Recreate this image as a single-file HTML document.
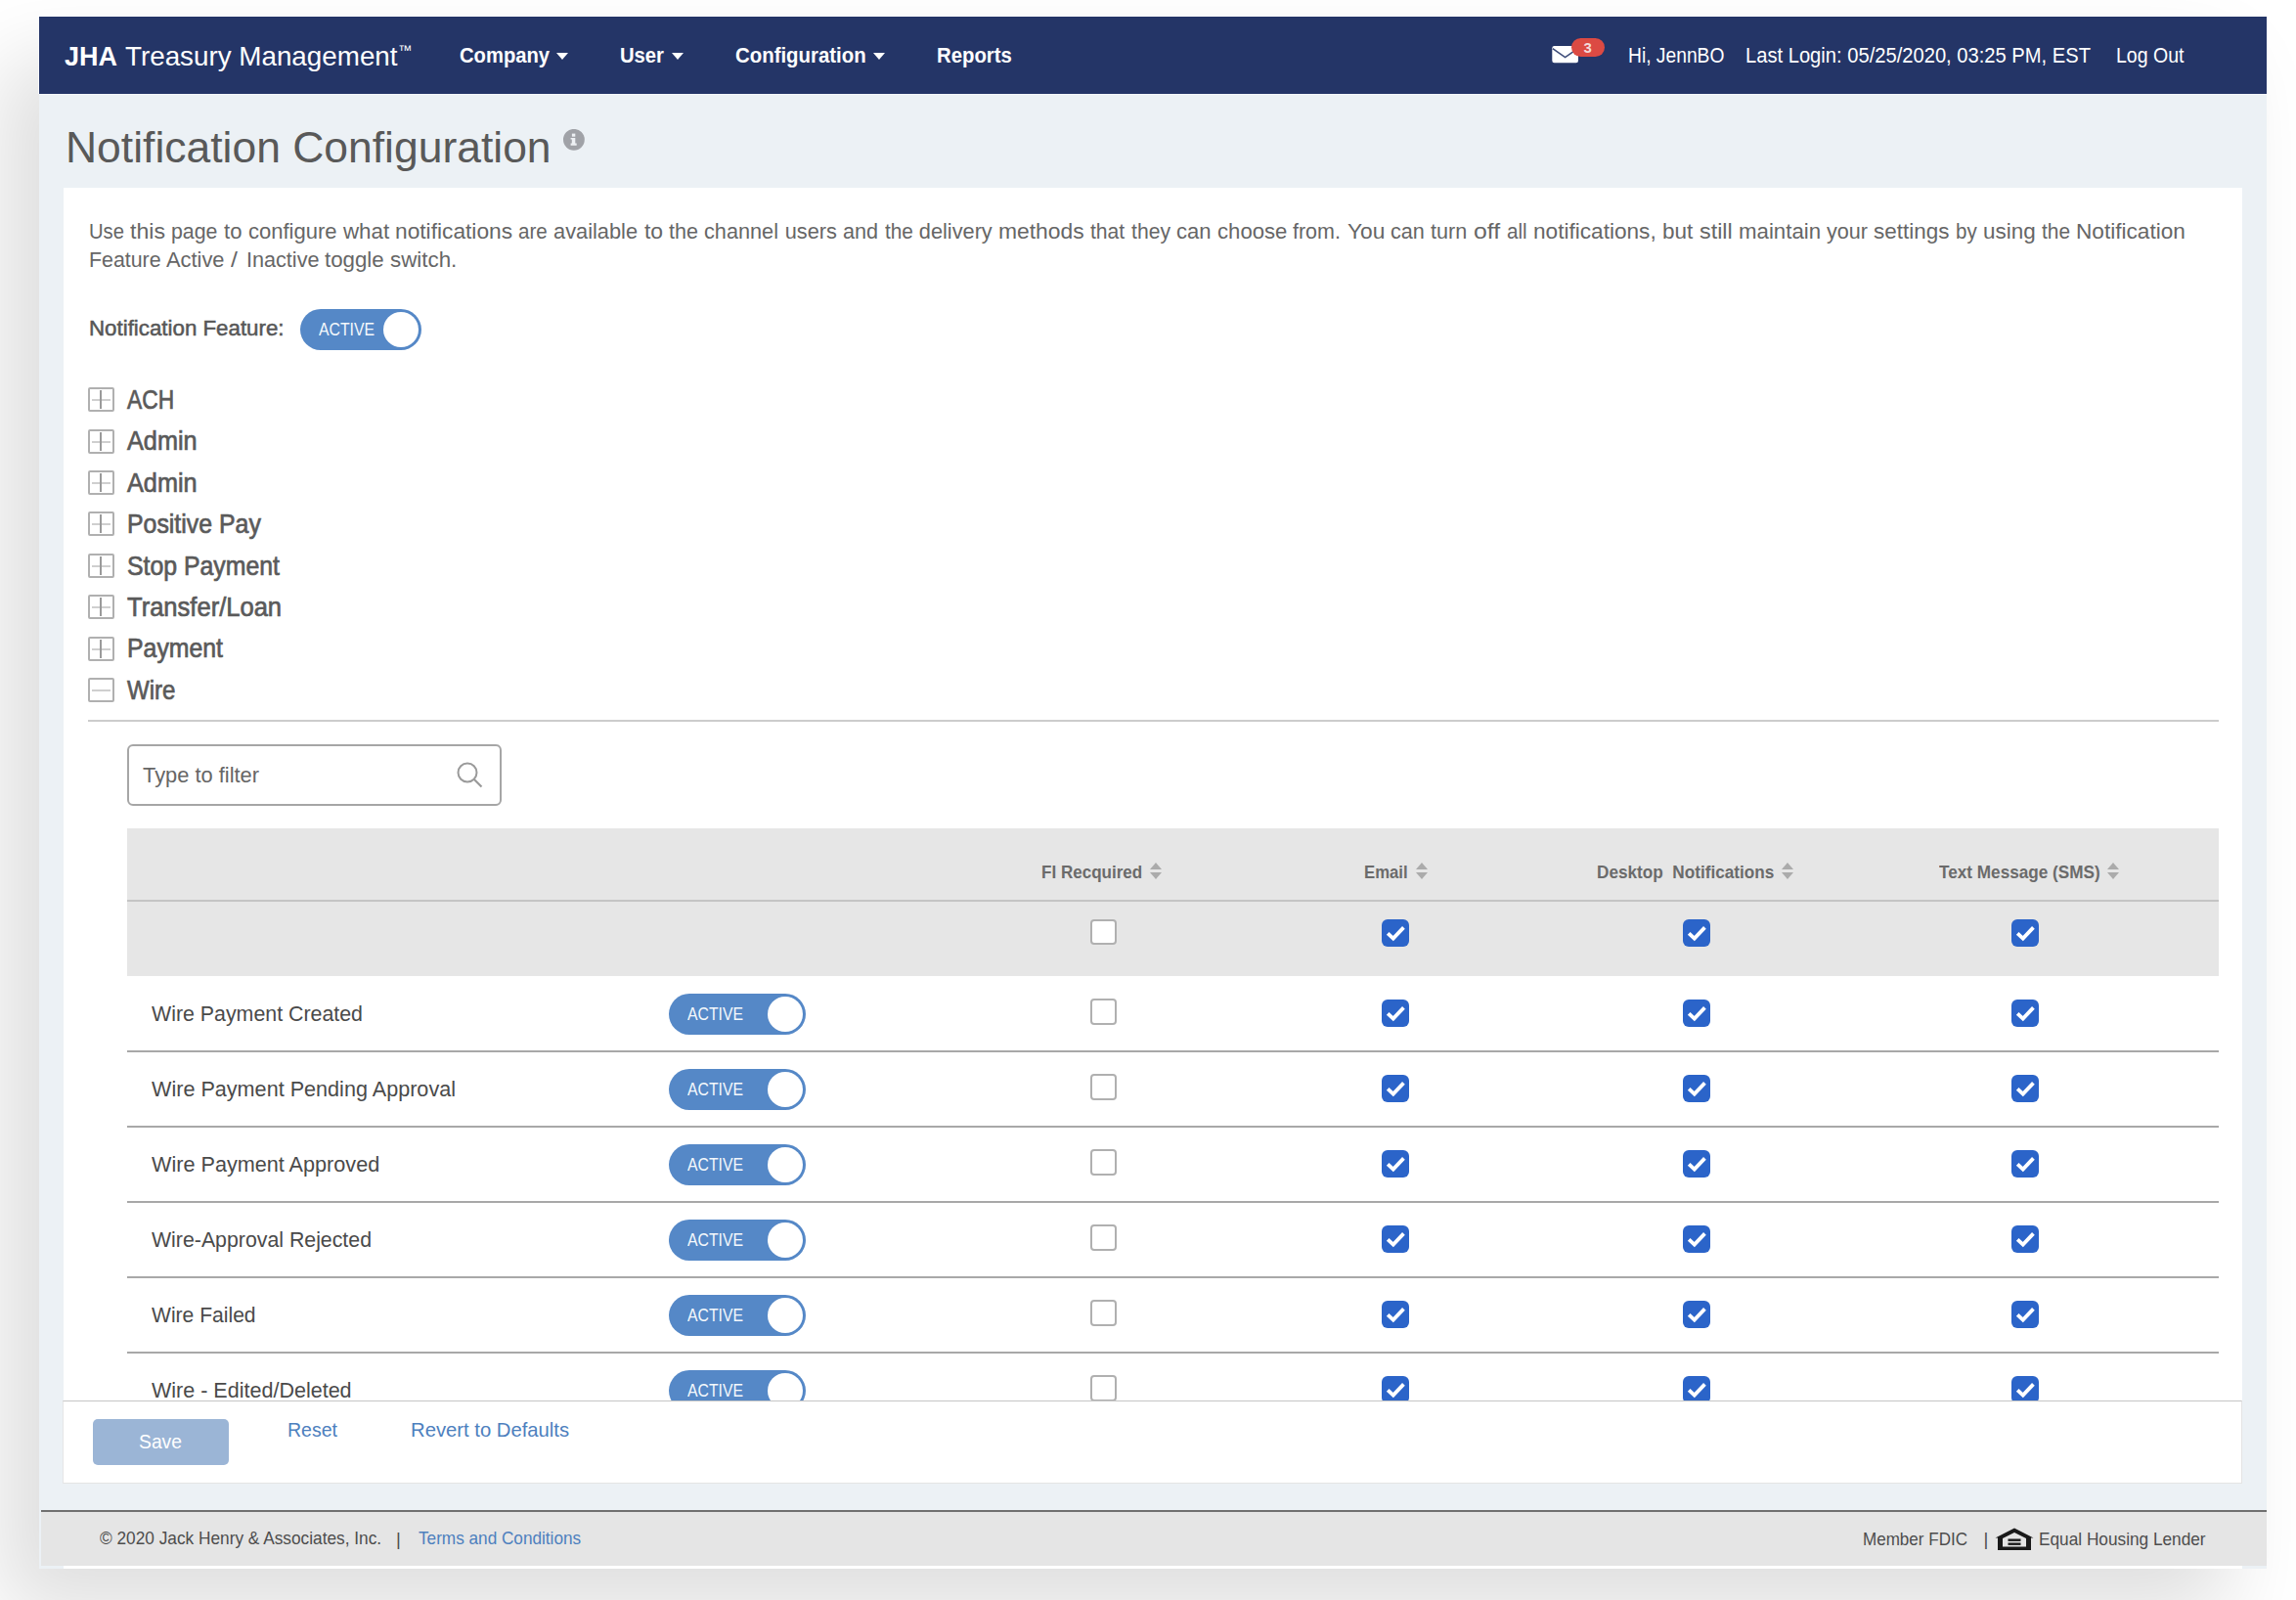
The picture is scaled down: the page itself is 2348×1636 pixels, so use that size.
<!DOCTYPE html>
<html><head><meta charset="utf-8"><title>Notification Configuration</title>
<style>
html,body{margin:0;padding:0;}
body{width:2348px;height:1636px;overflow:hidden;position:relative;background:#fff;font-family:"Liberation Sans",sans-serif;}
.t{position:absolute;white-space:nowrap;}
.r{position:absolute;}
</style></head><body>
<div class="r" style="left:40px;top:17px;width:2278px;height:1587px;background:#fff;box-shadow:-40px 45px 80px rgba(0,0,0,0.13);"></div><div class="r" style="left:39px;top:16px;width:2279px;height:80px;background:#fff;"></div><div class="r" style="left:40px;top:17px;width:2278px;height:1587px;background:#ecf1f5;"></div><div class="r" style="left:40px;top:17px;width:2278px;height:79px;background:#243567;"></div><div class="r" style="left:40px;top:96px;width:2278px;height:1px;background:#f3f6f9;"></div><div class="t" style="left:65.70px;top:38.50px;font-size:28.25px;line-height:37px;transform:scaleX(0.9553);transform-origin:0 0;color:#fff;font-weight:bold;">JHA</div><div class="t" style="left:127.50px;top:38.50px;font-size:28.25px;line-height:37px;transform:scaleX(0.9836);transform-origin:0 0;color:#fff;">Treasury Management</div><div class="t" style="left:407.00px;top:42.00px;font-size:14.0px;line-height:18px;color:#fff;">™</div><div class="t" style="left:469.50px;top:42.00px;font-size:22.0px;line-height:29px;transform:scaleX(0.9189);transform-origin:0 0;color:#fff;font-weight:bold;">Company</div><div class="r" style="left:569px;top:54px;width:0;height:0;border-left:6.5px solid transparent;border-right:6.5px solid transparent;border-top:7px solid #fff;"></div><div class="t" style="left:634.00px;top:42.00px;font-size:22.0px;line-height:29px;transform:scaleX(0.9197);transform-origin:0 0;color:#fff;font-weight:bold;">User</div><div class="r" style="left:686.6px;top:54px;width:0;height:0;border-left:6.5px solid transparent;border-right:6.5px solid transparent;border-top:7px solid #fff;"></div><div class="t" style="left:752.00px;top:42.00px;font-size:22.0px;line-height:29px;transform:scaleX(0.9273);transform-origin:0 0;color:#fff;font-weight:bold;">Configuration</div><div class="r" style="left:893px;top:54px;width:0;height:0;border-left:6.5px solid transparent;border-right:6.5px solid transparent;border-top:7px solid #fff;"></div><div class="t" style="left:958.00px;top:42.00px;font-size:22.0px;line-height:29px;transform:scaleX(0.9240);transform-origin:0 0;color:#fff;font-weight:bold;">Reports</div><svg class="r" style="left:1587px;top:46px" width="28" height="19" viewBox="0 0 28 19"><rect x="0.3" y="1" width="26.7" height="17.2" rx="2.2" fill="#fff"/><path d="M0.8 3.6 L13.6 12.6 L26.5 3.6" stroke="#3d4c79" stroke-width="1.6" fill="none"/></svg><div class="r" style="left:1606.5px;top:39px;width:34.5px;height:19px;background:#dc4a43;border-radius:9.5px;"></div><div class="t" style="left:1619.60px;top:39.20px;font-size:15.0px;line-height:20px;color:#f3dada;font-weight:bold;">3</div><div class="t" style="left:1665.00px;top:42.90px;font-size:21.75px;line-height:28px;transform:scaleX(0.8848);transform-origin:0 0;color:#fff;">Hi, JennBO</div><div class="t" style="left:1784.50px;top:42.90px;font-size:21.75px;line-height:28px;transform:scaleX(0.9268);transform-origin:0 0;color:#fff;">Last Login: 05/25/2020, 03:25 PM, EST</div><div class="t" style="left:2163.50px;top:42.90px;font-size:21.75px;line-height:28px;transform:scaleX(0.8981);transform-origin:0 0;color:#fff;">Log Out</div><div class="t" style="left:67.40px;top:121.50px;font-size:44.25px;line-height:58px;transform:scaleX(1.0044);transform-origin:0 0;color:#595959;">Notification Configuration</div><svg class="r" style="left:575px;top:132px" width="24" height="24" viewBox="0 0 24 24"><circle cx="11.9" cy="10.8" r="10.9" fill="#a0a2a7"/><rect x="9.9" y="4.6" width="3.4" height="3.1" fill="#eef1f4"/><path d="M8.6 9.1 H13.3 V14.4 H14.7 V16.7 H8.6 V14.4 H9.8 V10.5 H8.6 Z" fill="#eef1f4"/></svg><div class="r" style="left:65px;top:192px;width:2228px;height:1324px;background:#fff;"></div><div class="t" style="left:90.60px;top:222.50px;font-size:21.75px;line-height:28px;transform:scaleX(0.9309);transform-origin:0 0;color:#666;">Use</div><div class="t" style="left:132.90px;top:222.50px;font-size:21.75px;line-height:28px;transform:scaleX(1.0637);transform-origin:0 0;color:#666;">this</div><div class="t" style="left:175.20px;top:222.50px;font-size:21.75px;line-height:28px;transform:scaleX(0.9795);transform-origin:0 0;color:#666;">page</div><div class="t" style="left:228.90px;top:222.50px;font-size:21.75px;line-height:28px;transform:scaleX(1.0144);transform-origin:0 0;color:#666;">to</div><div class="t" style="left:253.60px;top:222.50px;font-size:21.75px;line-height:28px;transform:scaleX(1.0125);transform-origin:0 0;color:#666;">configure</div><div class="t" style="left:350.54px;top:222.50px;font-size:21.75px;line-height:28px;transform:scaleX(1.0265);transform-origin:0 0;color:#666;">what</div><div class="t" style="left:404.00px;top:222.50px;font-size:21.75px;line-height:28px;transform:scaleX(1.0456);transform-origin:0 0;color:#666;">notifications</div><div class="t" style="left:530.40px;top:222.50px;font-size:21.75px;line-height:28px;transform:scaleX(0.9450);transform-origin:0 0;color:#666;">are</div><div class="t" style="left:566.40px;top:222.50px;font-size:21.75px;line-height:28px;transform:scaleX(1.0029);transform-origin:0 0;color:#666;">available</div><div class="t" style="left:658.80px;top:222.50px;font-size:21.75px;line-height:28px;transform:scaleX(1.0530);transform-origin:0 0;color:#666;">to</div><div class="t" style="left:684.20px;top:222.50px;font-size:21.75px;line-height:28px;transform:scaleX(0.9890);transform-origin:0 0;color:#666;">the</div><div class="t" style="left:720.40px;top:222.50px;font-size:21.75px;line-height:28px;transform:scaleX(0.9975);transform-origin:0 0;color:#666;">channel</div><div class="t" style="left:802.70px;top:222.50px;font-size:21.75px;line-height:28px;color:#666;">users</div><div class="t" style="left:862.20px;top:222.50px;font-size:21.75px;line-height:28px;transform:scaleX(0.9951);transform-origin:0 0;color:#666;">and</div><div class="t" style="left:904.60px;top:222.50px;font-size:21.75px;line-height:28px;transform:scaleX(0.9559);transform-origin:0 0;color:#666;">the</div><div class="t" style="left:939.80px;top:222.50px;font-size:21.75px;line-height:28px;color:#666;">delivery</div><div class="t" style="left:1021.00px;top:222.50px;font-size:21.75px;line-height:28px;transform:scaleX(1.0514);transform-origin:0 0;color:#666;">methods</div><div class="t" style="left:1115.00px;top:222.50px;font-size:21.75px;line-height:28px;transform:scaleX(0.9703);transform-origin:0 0;color:#666;">that</div><div class="t" style="left:1156.50px;top:222.50px;font-size:21.75px;line-height:28px;transform:scaleX(0.9731);transform-origin:0 0;color:#666;">they</div><div class="t" style="left:1202.80px;top:222.50px;font-size:21.75px;line-height:28px;transform:scaleX(1.0125);transform-origin:0 0;color:#666;">can</div><div class="t" style="left:1244.60px;top:222.50px;font-size:21.75px;line-height:28px;transform:scaleX(1.0179);transform-origin:0 0;color:#666;">choose</div><div class="t" style="left:1322.30px;top:222.50px;font-size:21.75px;line-height:28px;transform:scaleX(0.9870);transform-origin:0 0;color:#666;">from.</div><div class="t" style="left:1377.50px;top:222.50px;font-size:21.75px;line-height:28px;transform:scaleX(1.0459);transform-origin:0 0;color:#666;">You</div><div class="t" style="left:1422.20px;top:222.50px;font-size:21.75px;line-height:28px;transform:scaleX(0.9954);transform-origin:0 0;color:#666;">can</div><div class="t" style="left:1463.40px;top:222.50px;font-size:21.75px;line-height:28px;transform:scaleX(0.9927);transform-origin:0 0;color:#666;">turn</div><div class="t" style="left:1506.90px;top:222.50px;font-size:21.75px;line-height:28px;transform:scaleX(1.1394);transform-origin:0 0;color:#666;">off</div><div class="t" style="left:1541.00px;top:222.50px;font-size:21.75px;line-height:28px;transform:scaleX(0.9508);transform-origin:0 0;color:#666;">all</div><div class="t" style="left:1568.00px;top:222.50px;font-size:21.75px;line-height:28px;transform:scaleX(1.0396);transform-origin:0 0;color:#666;">notifications,</div><div class="t" style="left:1700.00px;top:222.50px;font-size:21.75px;line-height:28px;transform:scaleX(1.0353);transform-origin:0 0;color:#666;">but</div><div class="t" style="left:1737.60px;top:222.50px;font-size:21.75px;line-height:28px;transform:scaleX(1.0730);transform-origin:0 0;color:#666;">still</div><div class="t" style="left:1777.60px;top:222.50px;font-size:21.75px;line-height:28px;transform:scaleX(1.0229);transform-origin:0 0;color:#666;">maintain</div><div class="t" style="left:1868.00px;top:222.50px;font-size:21.75px;line-height:28px;transform:scaleX(0.9928);transform-origin:0 0;color:#666;">your</div><div class="t" style="left:1916.30px;top:222.50px;font-size:21.75px;line-height:28px;transform:scaleX(1.0327);transform-origin:0 0;color:#666;">settings</div><div class="t" style="left:2000.00px;top:222.50px;font-size:21.75px;line-height:28px;transform:scaleX(0.9448);transform-origin:0 0;color:#666;">by</div><div class="t" style="left:2028.00px;top:222.50px;font-size:21.75px;line-height:28px;transform:scaleX(1.0326);transform-origin:0 0;color:#666;">using</div><div class="t" style="left:2088.00px;top:222.50px;font-size:21.75px;line-height:28px;transform:scaleX(0.9592);transform-origin:0 0;color:#666;">the</div><div class="t" style="left:2123.30px;top:222.50px;font-size:21.75px;line-height:28px;transform:scaleX(1.0400);transform-origin:0 0;color:#666;">Notification</div><div class="t" style="left:90.50px;top:251.50px;font-size:21.75px;line-height:28px;transform:scaleX(0.9820);transform-origin:0 0;color:#666;">Feature</div><div class="t" style="left:170.40px;top:251.50px;font-size:21.75px;line-height:28px;transform:scaleX(1.0046);transform-origin:0 0;color:#666;">Active</div><div class="t" style="left:236.20px;top:251.50px;font-size:21.75px;line-height:28px;transform:scaleX(1.1417);transform-origin:0 0;color:#666;">/</div><div class="t" style="left:251.50px;top:251.50px;font-size:21.75px;line-height:28px;transform:scaleX(0.9940);transform-origin:0 0;color:#666;">Inactive</div><div class="t" style="left:332.30px;top:251.50px;font-size:21.75px;line-height:28px;transform:scaleX(1.0241);transform-origin:0 0;color:#666;">toggle</div><div class="t" style="left:399.30px;top:251.50px;font-size:21.75px;line-height:28px;transform:scaleX(1.0276);transform-origin:0 0;color:#666;">switch.</div><div class="t" style="left:90.50px;top:321.50px;font-size:21.75px;line-height:28px;transform:scaleX(1.0250);transform-origin:0 0;color:#575757;-webkit-text-stroke:0.5px #575757;">Notification Feature:</div><div class="r" style="left:307px;top:316px;width:124px;height:42px;background:#5588c7;border-radius:21.0px;"></div><div class="r" style="left:391.9px;top:318.9px;width:36.2px;height:36.2px;background:#fff;border-radius:50%;"></div><div class="t" style="left:326.00px;top:324.60px;font-size:18.5px;line-height:24px;transform:scaleX(0.8530);transform-origin:0 0;color:#f4f8fc;">ACTIVE</div><div class="r" style="left:90px;top:396px;width:27px;height:25px;border:2px solid #b0b0b0;border-radius:2px;box-sizing:border-box;"></div><div class="r" style="left:94px;top:408px;width:19px;height:2px;background:#cfcfcf;"></div><div class="r" style="left:102px;top:399px;width:2px;height:19px;background:#9a9a9a;"></div><div class="t" style="left:130.40px;top:391.00px;font-size:27.25px;line-height:35px;transform:scaleX(0.8362);transform-origin:0 0;color:#5a5a5a;-webkit-text-stroke:0.7px #5a5a5a;">ACH</div><div class="r" style="left:90px;top:439px;width:27px;height:25px;border:2px solid #b0b0b0;border-radius:2px;box-sizing:border-box;"></div><div class="r" style="left:94px;top:451px;width:19px;height:2px;background:#cfcfcf;"></div><div class="r" style="left:102px;top:442px;width:2px;height:19px;background:#9a9a9a;"></div><div class="t" style="left:130.40px;top:433.40px;font-size:27.25px;line-height:35px;transform:scaleX(0.9268);transform-origin:0 0;color:#5a5a5a;-webkit-text-stroke:0.7px #5a5a5a;">Admin</div><div class="r" style="left:90px;top:481px;width:27px;height:25px;border:2px solid #b0b0b0;border-radius:2px;box-sizing:border-box;"></div><div class="r" style="left:94px;top:493px;width:19px;height:2px;background:#cfcfcf;"></div><div class="r" style="left:102px;top:484px;width:2px;height:19px;background:#9a9a9a;"></div><div class="t" style="left:130.40px;top:475.80px;font-size:27.25px;line-height:35px;transform:scaleX(0.9268);transform-origin:0 0;color:#5a5a5a;-webkit-text-stroke:0.7px #5a5a5a;">Admin</div><div class="r" style="left:90px;top:523px;width:27px;height:25px;border:2px solid #b0b0b0;border-radius:2px;box-sizing:border-box;"></div><div class="r" style="left:94px;top:535px;width:19px;height:2px;background:#cfcfcf;"></div><div class="r" style="left:102px;top:526px;width:2px;height:19px;background:#9a9a9a;"></div><div class="t" style="left:130.40px;top:518.20px;font-size:27.25px;line-height:35px;transform:scaleX(0.9124);transform-origin:0 0;color:#5a5a5a;-webkit-text-stroke:0.7px #5a5a5a;">Positive Pay</div><div class="r" style="left:90px;top:566px;width:27px;height:25px;border:2px solid #b0b0b0;border-radius:2px;box-sizing:border-box;"></div><div class="r" style="left:94px;top:578px;width:19px;height:2px;background:#cfcfcf;"></div><div class="r" style="left:102px;top:569px;width:2px;height:19px;background:#9a9a9a;"></div><div class="t" style="left:130.40px;top:560.60px;font-size:27.25px;line-height:35px;transform:scaleX(0.9114);transform-origin:0 0;color:#5a5a5a;-webkit-text-stroke:0.7px #5a5a5a;">Stop Payment</div><div class="r" style="left:90px;top:608px;width:27px;height:25px;border:2px solid #b0b0b0;border-radius:2px;box-sizing:border-box;"></div><div class="r" style="left:94px;top:620px;width:19px;height:2px;background:#cfcfcf;"></div><div class="r" style="left:102px;top:611px;width:2px;height:19px;background:#9a9a9a;"></div><div class="t" style="left:130.40px;top:603.00px;font-size:27.25px;line-height:35px;transform:scaleX(0.9374);transform-origin:0 0;color:#5a5a5a;-webkit-text-stroke:0.7px #5a5a5a;">Transfer/Loan</div><div class="r" style="left:90px;top:651px;width:27px;height:25px;border:2px solid #b0b0b0;border-radius:2px;box-sizing:border-box;"></div><div class="r" style="left:94px;top:663px;width:19px;height:2px;background:#cfcfcf;"></div><div class="r" style="left:102px;top:654px;width:2px;height:19px;background:#9a9a9a;"></div><div class="t" style="left:130.40px;top:645.40px;font-size:27.25px;line-height:35px;transform:scaleX(0.9114);transform-origin:0 0;color:#5a5a5a;-webkit-text-stroke:0.7px #5a5a5a;">Payment</div><div class="r" style="left:90px;top:693px;width:27px;height:25px;border:2px solid #b0b0b0;border-radius:2px;box-sizing:border-box;"></div><div class="r" style="left:94px;top:705px;width:19px;height:2px;background:#cfcfcf;"></div><div class="t" style="left:130.40px;top:687.80px;font-size:27.25px;line-height:35px;transform:scaleX(0.8839);transform-origin:0 0;color:#5a5a5a;-webkit-text-stroke:0.7px #5a5a5a;">Wire</div><div class="r" style="left:90px;top:736px;width:2179px;height:2px;background:#cccccc;"></div><div class="r" style="left:130px;top:761px;width:383px;height:63px;border:2px solid #a6a6a6;border-radius:6px;box-sizing:border-box;background:#fff;"></div><div class="t" style="left:146.00px;top:778.00px;font-size:22.5px;line-height:29px;transform:scaleX(0.9710);transform-origin:0 0;color:#666;">Type to filter</div><svg class="r" style="left:465px;top:777px" width="30" height="30" viewBox="0 0 30 30"><circle cx="13" cy="13" r="9.5" stroke="#9a9a9a" stroke-width="2" fill="none"/><path d="M20 20 L27.5 27.5" stroke="#9a9a9a" stroke-width="2.2"/></svg><div class="r" style="left:130px;top:847px;width:2139px;height:151px;background:#e6e6e6;"></div><div class="r" style="left:130px;top:920px;width:2139px;height:2px;background:#c4c4c4;"></div><div class="t" style="left:1065.30px;top:879.50px;font-size:18.25px;line-height:24px;transform:scaleX(0.9336);transform-origin:0 0;color:#6b6b6b;font-weight:bold;white-space:pre;">FI Recquired</div><div class="r" style="left:1176px;top:882px;width:0;height:0;border-left:6px solid transparent;border-right:6px solid transparent;border-bottom:7px solid #ababab;"></div><div class="r" style="left:1176px;top:892px;width:0;height:0;border-left:6px solid transparent;border-right:6px solid transparent;border-top:7px solid #ababab;"></div><div class="t" style="left:1395.40px;top:879.50px;font-size:18.25px;line-height:24px;transform:scaleX(0.9160);transform-origin:0 0;color:#6b6b6b;font-weight:bold;white-space:pre;">Email</div><div class="r" style="left:1448px;top:882px;width:0;height:0;border-left:6px solid transparent;border-right:6px solid transparent;border-bottom:7px solid #ababab;"></div><div class="r" style="left:1448px;top:892px;width:0;height:0;border-left:6px solid transparent;border-right:6px solid transparent;border-top:7px solid #ababab;"></div><div class="t" style="left:1633.00px;top:879.50px;font-size:18.25px;line-height:24px;transform:scaleX(0.9410);transform-origin:0 0;color:#6b6b6b;font-weight:bold;white-space:pre;">Desktop  Notifications</div><div class="r" style="left:1822px;top:882px;width:0;height:0;border-left:6px solid transparent;border-right:6px solid transparent;border-bottom:7px solid #ababab;"></div><div class="r" style="left:1822px;top:892px;width:0;height:0;border-left:6px solid transparent;border-right:6px solid transparent;border-top:7px solid #ababab;"></div><div class="t" style="left:1982.60px;top:879.50px;font-size:18.25px;line-height:24px;transform:scaleX(0.9406);transform-origin:0 0;color:#6b6b6b;font-weight:bold;white-space:pre;">Text Message (SMS)</div><div class="r" style="left:2155px;top:882px;width:0;height:0;border-left:6px solid transparent;border-right:6px solid transparent;border-bottom:7px solid #ababab;"></div><div class="r" style="left:2155px;top:892px;width:0;height:0;border-left:6px solid transparent;border-right:6px solid transparent;border-top:7px solid #ababab;"></div><div class="r" style="left:1115px;top:940px;width:27px;height:26px;background:#fff;border:2px solid #b0b0b0;border-radius:4px;box-sizing:border-box;"></div><svg class="r" style="left:1413px;top:940px" width="28" height="28" viewBox="0 0 28 28"><rect x="0" y="0" width="28" height="28" rx="6" fill="#2b64c9"/><path d="M6.2 14.3 L11.8 19.6 L22.4 8.4" stroke="#fff" stroke-width="3.8" fill="none" stroke-linecap="butt" stroke-linejoin="miter"/></svg><svg class="r" style="left:1721px;top:940px" width="28" height="28" viewBox="0 0 28 28"><rect x="0" y="0" width="28" height="28" rx="6" fill="#2b64c9"/><path d="M6.2 14.3 L11.8 19.6 L22.4 8.4" stroke="#fff" stroke-width="3.8" fill="none" stroke-linecap="butt" stroke-linejoin="miter"/></svg><svg class="r" style="left:2057px;top:940px" width="28" height="28" viewBox="0 0 28 28"><rect x="0" y="0" width="28" height="28" rx="6" fill="#2b64c9"/><path d="M6.2 14.3 L11.8 19.6 L22.4 8.4" stroke="#fff" stroke-width="3.8" fill="none" stroke-linecap="butt" stroke-linejoin="miter"/></svg><div class="r" style="left:0;top:0;width:2348px;height:1432px;overflow:hidden;"><div class="t" style="left:155.40px;top:1022.00px;font-size:22.25px;line-height:29px;transform:scaleX(0.9597);transform-origin:0 0;color:#4a4a4a;">Wire Payment Created</div><div class="r" style="left:684px;top:1016px;width:140px;height:42px;background:#5588c7;border-radius:21.0px;"></div><div class="r" style="left:784.9px;top:1018.9px;width:36.2px;height:36.2px;background:#fff;border-radius:50%;"></div><div class="t" style="left:703.30px;top:1025.30px;font-size:18.5px;line-height:24px;transform:scaleX(0.8530);transform-origin:0 0;color:#f4f8fc;">ACTIVE</div><div class="r" style="left:1115px;top:1021px;width:27px;height:27px;background:#fff;border:2px solid #b0b0b0;border-radius:4px;box-sizing:border-box;"></div><svg class="r" style="left:1413px;top:1022px" width="28" height="28" viewBox="0 0 28 28"><rect x="0" y="0" width="28" height="28" rx="6" fill="#2b64c9"/><path d="M6.2 14.3 L11.8 19.6 L22.4 8.4" stroke="#fff" stroke-width="3.8" fill="none" stroke-linecap="butt" stroke-linejoin="miter"/></svg><svg class="r" style="left:1721px;top:1022px" width="28" height="28" viewBox="0 0 28 28"><rect x="0" y="0" width="28" height="28" rx="6" fill="#2b64c9"/><path d="M6.2 14.3 L11.8 19.6 L22.4 8.4" stroke="#fff" stroke-width="3.8" fill="none" stroke-linecap="butt" stroke-linejoin="miter"/></svg><svg class="r" style="left:2057px;top:1022px" width="28" height="28" viewBox="0 0 28 28"><rect x="0" y="0" width="28" height="28" rx="6" fill="#2b64c9"/><path d="M6.2 14.3 L11.8 19.6 L22.4 8.4" stroke="#fff" stroke-width="3.8" fill="none" stroke-linecap="butt" stroke-linejoin="miter"/></svg><div class="r" style="left:130px;top:1074px;width:2139px;height:2px;background:#a8a8a8;"></div><div class="t" style="left:155.40px;top:1099.00px;font-size:22.25px;line-height:29px;transform:scaleX(0.9709);transform-origin:0 0;color:#4a4a4a;">Wire Payment Pending Approval</div><div class="r" style="left:684px;top:1093px;width:140px;height:42px;background:#5588c7;border-radius:21.0px;"></div><div class="r" style="left:784.9px;top:1095.9px;width:36.2px;height:36.2px;background:#fff;border-radius:50%;"></div><div class="t" style="left:703.30px;top:1102.30px;font-size:18.5px;line-height:24px;transform:scaleX(0.8530);transform-origin:0 0;color:#f4f8fc;">ACTIVE</div><div class="r" style="left:1115px;top:1098px;width:27px;height:27px;background:#fff;border:2px solid #b0b0b0;border-radius:4px;box-sizing:border-box;"></div><svg class="r" style="left:1413px;top:1099px" width="28" height="28" viewBox="0 0 28 28"><rect x="0" y="0" width="28" height="28" rx="6" fill="#2b64c9"/><path d="M6.2 14.3 L11.8 19.6 L22.4 8.4" stroke="#fff" stroke-width="3.8" fill="none" stroke-linecap="butt" stroke-linejoin="miter"/></svg><svg class="r" style="left:1721px;top:1099px" width="28" height="28" viewBox="0 0 28 28"><rect x="0" y="0" width="28" height="28" rx="6" fill="#2b64c9"/><path d="M6.2 14.3 L11.8 19.6 L22.4 8.4" stroke="#fff" stroke-width="3.8" fill="none" stroke-linecap="butt" stroke-linejoin="miter"/></svg><svg class="r" style="left:2057px;top:1099px" width="28" height="28" viewBox="0 0 28 28"><rect x="0" y="0" width="28" height="28" rx="6" fill="#2b64c9"/><path d="M6.2 14.3 L11.8 19.6 L22.4 8.4" stroke="#fff" stroke-width="3.8" fill="none" stroke-linecap="butt" stroke-linejoin="miter"/></svg><div class="r" style="left:130px;top:1151px;width:2139px;height:2px;background:#a8a8a8;"></div><div class="t" style="left:155.40px;top:1176.00px;font-size:22.25px;line-height:29px;transform:scaleX(0.9720);transform-origin:0 0;color:#4a4a4a;">Wire Payment Approved</div><div class="r" style="left:684px;top:1170px;width:140px;height:42px;background:#5588c7;border-radius:21.0px;"></div><div class="r" style="left:784.9px;top:1172.9px;width:36.2px;height:36.2px;background:#fff;border-radius:50%;"></div><div class="t" style="left:703.30px;top:1179.30px;font-size:18.5px;line-height:24px;transform:scaleX(0.8530);transform-origin:0 0;color:#f4f8fc;">ACTIVE</div><div class="r" style="left:1115px;top:1175px;width:27px;height:27px;background:#fff;border:2px solid #b0b0b0;border-radius:4px;box-sizing:border-box;"></div><svg class="r" style="left:1413px;top:1176px" width="28" height="28" viewBox="0 0 28 28"><rect x="0" y="0" width="28" height="28" rx="6" fill="#2b64c9"/><path d="M6.2 14.3 L11.8 19.6 L22.4 8.4" stroke="#fff" stroke-width="3.8" fill="none" stroke-linecap="butt" stroke-linejoin="miter"/></svg><svg class="r" style="left:1721px;top:1176px" width="28" height="28" viewBox="0 0 28 28"><rect x="0" y="0" width="28" height="28" rx="6" fill="#2b64c9"/><path d="M6.2 14.3 L11.8 19.6 L22.4 8.4" stroke="#fff" stroke-width="3.8" fill="none" stroke-linecap="butt" stroke-linejoin="miter"/></svg><svg class="r" style="left:2057px;top:1176px" width="28" height="28" viewBox="0 0 28 28"><rect x="0" y="0" width="28" height="28" rx="6" fill="#2b64c9"/><path d="M6.2 14.3 L11.8 19.6 L22.4 8.4" stroke="#fff" stroke-width="3.8" fill="none" stroke-linecap="butt" stroke-linejoin="miter"/></svg><div class="r" style="left:130px;top:1228px;width:2139px;height:2px;background:#a8a8a8;"></div><div class="t" style="left:155.40px;top:1253.00px;font-size:22.25px;line-height:29px;transform:scaleX(0.9576);transform-origin:0 0;color:#4a4a4a;">Wire-Approval Rejected</div><div class="r" style="left:684px;top:1247px;width:140px;height:42px;background:#5588c7;border-radius:21.0px;"></div><div class="r" style="left:784.9px;top:1249.9px;width:36.2px;height:36.2px;background:#fff;border-radius:50%;"></div><div class="t" style="left:703.30px;top:1256.30px;font-size:18.5px;line-height:24px;transform:scaleX(0.8530);transform-origin:0 0;color:#f4f8fc;">ACTIVE</div><div class="r" style="left:1115px;top:1252px;width:27px;height:27px;background:#fff;border:2px solid #b0b0b0;border-radius:4px;box-sizing:border-box;"></div><svg class="r" style="left:1413px;top:1253px" width="28" height="28" viewBox="0 0 28 28"><rect x="0" y="0" width="28" height="28" rx="6" fill="#2b64c9"/><path d="M6.2 14.3 L11.8 19.6 L22.4 8.4" stroke="#fff" stroke-width="3.8" fill="none" stroke-linecap="butt" stroke-linejoin="miter"/></svg><svg class="r" style="left:1721px;top:1253px" width="28" height="28" viewBox="0 0 28 28"><rect x="0" y="0" width="28" height="28" rx="6" fill="#2b64c9"/><path d="M6.2 14.3 L11.8 19.6 L22.4 8.4" stroke="#fff" stroke-width="3.8" fill="none" stroke-linecap="butt" stroke-linejoin="miter"/></svg><svg class="r" style="left:2057px;top:1253px" width="28" height="28" viewBox="0 0 28 28"><rect x="0" y="0" width="28" height="28" rx="6" fill="#2b64c9"/><path d="M6.2 14.3 L11.8 19.6 L22.4 8.4" stroke="#fff" stroke-width="3.8" fill="none" stroke-linecap="butt" stroke-linejoin="miter"/></svg><div class="r" style="left:130px;top:1305px;width:2139px;height:2px;background:#a8a8a8;"></div><div class="t" style="left:155.40px;top:1330.00px;font-size:22.25px;line-height:29px;transform:scaleX(0.9474);transform-origin:0 0;color:#4a4a4a;">Wire Failed</div><div class="r" style="left:684px;top:1324px;width:140px;height:42px;background:#5588c7;border-radius:21.0px;"></div><div class="r" style="left:784.9px;top:1326.9px;width:36.2px;height:36.2px;background:#fff;border-radius:50%;"></div><div class="t" style="left:703.30px;top:1333.30px;font-size:18.5px;line-height:24px;transform:scaleX(0.8530);transform-origin:0 0;color:#f4f8fc;">ACTIVE</div><div class="r" style="left:1115px;top:1329px;width:27px;height:27px;background:#fff;border:2px solid #b0b0b0;border-radius:4px;box-sizing:border-box;"></div><svg class="r" style="left:1413px;top:1330px" width="28" height="28" viewBox="0 0 28 28"><rect x="0" y="0" width="28" height="28" rx="6" fill="#2b64c9"/><path d="M6.2 14.3 L11.8 19.6 L22.4 8.4" stroke="#fff" stroke-width="3.8" fill="none" stroke-linecap="butt" stroke-linejoin="miter"/></svg><svg class="r" style="left:1721px;top:1330px" width="28" height="28" viewBox="0 0 28 28"><rect x="0" y="0" width="28" height="28" rx="6" fill="#2b64c9"/><path d="M6.2 14.3 L11.8 19.6 L22.4 8.4" stroke="#fff" stroke-width="3.8" fill="none" stroke-linecap="butt" stroke-linejoin="miter"/></svg><svg class="r" style="left:2057px;top:1330px" width="28" height="28" viewBox="0 0 28 28"><rect x="0" y="0" width="28" height="28" rx="6" fill="#2b64c9"/><path d="M6.2 14.3 L11.8 19.6 L22.4 8.4" stroke="#fff" stroke-width="3.8" fill="none" stroke-linecap="butt" stroke-linejoin="miter"/></svg><div class="r" style="left:130px;top:1382px;width:2139px;height:2px;background:#a8a8a8;"></div><div class="t" style="left:155.40px;top:1407.00px;font-size:22.25px;line-height:29px;transform:scaleX(0.9675);transform-origin:0 0;color:#4a4a4a;">Wire - Edited/Deleted</div><div class="r" style="left:684px;top:1401px;width:140px;height:42px;background:#5588c7;border-radius:21.0px;"></div><div class="r" style="left:784.9px;top:1403.9px;width:36.2px;height:36.2px;background:#fff;border-radius:50%;"></div><div class="t" style="left:703.30px;top:1410.30px;font-size:18.5px;line-height:24px;transform:scaleX(0.8530);transform-origin:0 0;color:#f4f8fc;">ACTIVE</div><div class="r" style="left:1115px;top:1406px;width:27px;height:27px;background:#fff;border:2px solid #b0b0b0;border-radius:4px;box-sizing:border-box;"></div><svg class="r" style="left:1413px;top:1407px" width="28" height="28" viewBox="0 0 28 28"><rect x="0" y="0" width="28" height="28" rx="6" fill="#2b64c9"/><path d="M6.2 14.3 L11.8 19.6 L22.4 8.4" stroke="#fff" stroke-width="3.8" fill="none" stroke-linecap="butt" stroke-linejoin="miter"/></svg><svg class="r" style="left:1721px;top:1407px" width="28" height="28" viewBox="0 0 28 28"><rect x="0" y="0" width="28" height="28" rx="6" fill="#2b64c9"/><path d="M6.2 14.3 L11.8 19.6 L22.4 8.4" stroke="#fff" stroke-width="3.8" fill="none" stroke-linecap="butt" stroke-linejoin="miter"/></svg><svg class="r" style="left:2057px;top:1407px" width="28" height="28" viewBox="0 0 28 28"><rect x="0" y="0" width="28" height="28" rx="6" fill="#2b64c9"/><path d="M6.2 14.3 L11.8 19.6 L22.4 8.4" stroke="#fff" stroke-width="3.8" fill="none" stroke-linecap="butt" stroke-linejoin="miter"/></svg></div><div class="r" style="left:64px;top:1432px;width:2229px;height:85px;background:#fff;border-top:1px solid #c6c6c6;border-left:1px solid #e6e6e6;border-right:1px solid #e4e4e4;border-bottom:1px solid #e4e4e4;box-sizing:border-box;"></div><div class="r" style="left:95px;top:1451px;width:139px;height:47px;background:#9bb5d6;border-radius:5px;"></div><div class="t" style="left:142.00px;top:1460.00px;font-size:21.0px;line-height:27px;transform:scaleX(0.9194);transform-origin:0 0;color:#fff;">Save</div><div class="t" style="left:294.00px;top:1448.00px;font-size:21.0px;line-height:27px;transform:scaleX(0.9298);transform-origin:0 0;color:#4d80be;">Reset</div><div class="t" style="left:420.40px;top:1448.00px;font-size:21.0px;line-height:27px;transform:scaleX(0.9645);transform-origin:0 0;color:#4d80be;">Revert to Defaults</div><div class="r" style="left:40px;top:1517px;width:2278px;height:87px;background:#ecf1f5;"></div><div class="r" style="left:42px;top:1544px;width:2276px;height:2px;background:#707070;"></div><div class="r" style="left:42px;top:1546px;width:2276px;height:55px;background:#e5e5e5;"></div><div class="r" style="left:65px;top:1601px;width:2228px;height:3px;background:#fff;"></div><div class="t" style="left:101.50px;top:1560.50px;font-size:18.5px;line-height:24px;transform:scaleX(0.9331);transform-origin:0 0;color:#4d4d4d;">© 2020 Jack Henry &amp; Associates, Inc.</div><div class="t" style="left:405.00px;top:1561.50px;font-size:18.5px;line-height:24px;color:#4d4d4d;">|</div><div class="t" style="left:428.40px;top:1560.50px;font-size:18.5px;line-height:24px;transform:scaleX(0.9284);transform-origin:0 0;color:#4d80be;">Terms and Conditions</div><div class="t" style="left:1905.00px;top:1561.50px;font-size:18.5px;line-height:24px;transform:scaleX(0.9213);transform-origin:0 0;color:#4d4d4d;">Member FDIC</div><div class="t" style="left:2028.50px;top:1561.50px;font-size:18.5px;line-height:24px;color:#4d4d4d;">|</div><svg class="r" style="left:2039px;top:1561px" width="42" height="25" viewBox="0 0 42 25"><path d="M21 1.5 L1.5 11.5 L4 11.5 L4 24 L38 24 L38 11.5 L40.5 11.5 Z" fill="#1a1a1a"/><path d="M9 12 L21 6 L33 12 L33 20.5 L9 20.5 Z" fill="#e5e5e5"/><rect x="14.5" y="12.5" width="13" height="2.4" fill="#1a1a1a"/><rect x="14.5" y="16.5" width="13" height="2.4" fill="#1a1a1a"/></svg><div class="t" style="left:2085.20px;top:1561.50px;font-size:18.5px;line-height:24px;transform:scaleX(0.9319);transform-origin:0 0;color:#4d4d4d;">Equal Housing Lender</div>
</body></html>
